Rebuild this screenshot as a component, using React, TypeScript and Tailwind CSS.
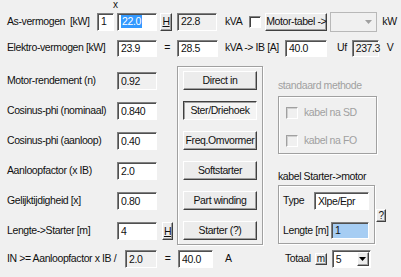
import React from "react";

const sunken =
  "border border-t-[#808080] border-l-[#808080] border-r-white border-b-white shadow-[inset_1px_1px_0_#505050] flex items-center pl-[3px] leading-none whitespace-nowrap";
const raised =
  "border border-t-white border-l-white border-r-[#404040] border-b-[#404040] shadow-[inset_-1px_-1px_0_#a0a0a0] bg-[#ececec] flex items-center justify-center leading-none whitespace-nowrap";
const pressed =
  "border border-t-[#404040] border-l-[#404040] border-r-white border-b-white shadow-[inset_1px_1px_0_#a0a0a0] bg-[#f4f4f4] flex items-center justify-center leading-none whitespace-nowrap";
const etched = "border border-[#a0a0a0] shadow-[inset_1px_1px_0_white,1px_1px_0_white]";

function Arrow({ color = "#000" }: { color?: string }) {
  return (
    <svg width="7" height="4" viewBox="0 0 7 4">
      <path d="M0 0h7L3.5 4z" fill={color} />
    </svg>
  );
}

function Check({ disabled }: { disabled?: boolean }) {
  return (
    <div
      className={
        disabled
          ? "w-[12px] h-[12px] border border-t-[#a0a0a0] border-l-[#a0a0a0] border-r-white border-b-white shadow-[inset_1px_1px_0_#d0d0d0] bg-[#f0f0f0] shrink-0"
          : "w-[12px] h-[12px] border border-t-[#808080] border-l-[#808080] border-r-white border-b-white shadow-[inset_1px_1px_0_#404040] bg-white shrink-0"
      }
    />
  );
}

export default function App() {
  return (
    <div className="w-[401px] h-[277px] bg-[#f0f0f0] text-[10.5px] tracking-[-0.4px] whitespace-nowrap text-[#111] font-['Liberation_Sans',Arial,sans-serif] relative overflow-hidden pt-[12px]">
      <span className="absolute left-[113px] top-[0px] text-[10px] leading-none">x</span>
      {/* Row 1 */}
      <div className="flex items-center h-[19px]">
        <span className="w-[97px] pl-[7px]">As-vermogen&nbsp; [kW]</span>
        <div className={`${sunken} w-[17px] h-[18px] bg-white`}>1</div>
        <div className={`${sunken} w-[40px] h-[18px] bg-white ml-[3px]`}>
          <span className="bg-[#3399ff] text-white px-[1px] h-[13px] flex items-center">22.0</span>
        </div>
        <div className={`${raised} w-[12px] h-[18px] ml-[3px] underline`}>H</div>
        <div className={`${sunken} w-[40px] h-[18px] ml-[5px] bg-[#f0f0f0]`}>22.8</div>
        <span className="ml-[8px]">kVA</span>
        <div className="ml-[7px]"><Check /></div>
        <div className={`${raised} w-[62px] h-[18px] ml-[4px] bg-[#e1e1e1]`}>Motor-tabel -&gt;</div>
        <div className="ml-[3px] w-[47px] h-[20px] border border-[#b8b8b8] bg-[#f0f0f0] flex items-center justify-end pr-[4px]">
          <Arrow color="#a0a0a0" />
        </div>
        <span className="ml-[5px]">kW</span>
      </div>
      {/* Row 2 */}
      <div className="flex items-center h-[18px] mt-[8px]">
        <span className="w-[117px] pl-[7px]">Elektro-vermogen [kW]</span>
        <div className={`${sunken} w-[40px] h-[17px] bg-white`}>23.9</div>
        <span className="w-[20px] text-center">=</span>
        <div className={`${sunken} w-[41px] h-[17px] bg-white`}>28.5</div>
        <span className="ml-[7px] w-[60px]">kVA -&gt; IB [A]</span>
        <div className={`${sunken} w-[42px] h-[17px] bg-white`}>40.0</div>
        <span className="ml-[10px]">Uf</span>
        <div className={`${sunken} w-[27px] h-[17px] ml-[5px] bg-[#f0f0f0] pl-[1px]`}>237.3</div>
        <span className="ml-[8px]">V</span>
      </div>
      {/* Middle */}
      <div className="flex mt-[9px] h-[180px]">
        <div className="w-[177px] flex flex-col pt-[6px] gap-[12px]">
          {[
            ["Motor-rendement (n)", "0.92", true],
            ["Cosinus-phi (nominaal)", "0.840", false],
            ["Cosinus-phi (aanloop)", "0.40", false],
            ["Aanloopfactor (x IB)", "2.0", false],
            ["Gelijktijdigheid [x]", "0.80", false],
            ["Lengte->Starter [m]", "4", false],
          ].map(([l, v, ro], i) => (
            <div key={i} className="flex items-center h-[18px]">
              <span className="w-[117px] pl-[7px]">{l as string}</span>
              <div className={`${sunken} w-[40px] h-[18px] ${ro ? "bg-[#f0f0f0]" : "bg-white"}`}>{v as string}</div>
              {i === 5 && <div className={`${raised} w-[11px] h-[18px] ml-[5px] underline`}>H</div>}
            </div>
          ))}
        </div>
        <div className={`${etched} w-[86px] h-[179px] flex flex-col items-center pt-[4px] gap-[11px]`}>
          <div className={`${raised} w-[74px] h-[19px]`}>Direct in</div>
          <div className={`${pressed} w-[74px] h-[19px]`}>Ster/Driehoek</div>
          <div className={`${raised} w-[74px] h-[19px]`}>Freq.Omvormer</div>
          <div className={`${raised} w-[74px] h-[19px]`}>Softstarter</div>
          <div className={`${raised} w-[74px] h-[19px]`}>Part winding</div>
          <div className={`${raised} w-[74px] h-[19px]`}>Starter (?)</div>
        </div>
        <div className="ml-[15px] flex flex-col">
          <span className="mt-[14px] text-[#a0a0a0] leading-none">standaard methode</span>
          <div className={`${etched} w-[99px] h-[58px] mt-[5px] flex flex-col pl-[7px] pt-[10px] gap-[16px] text-[#a0a0a0]`}>
            <div className="flex items-center gap-[6px] h-[12px]"><Check disabled />kabel na SD</div>
            <div className="flex items-center gap-[6px] h-[12px]"><Check disabled />kabel na FO</div>
          </div>
          <span className="mt-[17px] leading-none">kabel Starter-&gt;motor</span>
          <div className="flex mt-[4px]">
            <div className={`${etched} w-[97px] h-[59px] flex flex-col pl-[4px] pt-[6px] gap-[12px]`}>
              <div className="flex items-center h-[18px]">
                <span className="w-[31px]">Type</span>
                <div className={`${sunken} w-[55px] h-[18px] bg-white`}>Xlpe/Epr</div>
              </div>
              <div className="flex items-center h-[17px]">
                <span className="w-[48px]">Lengte [m]</span>
                <div className={`${sunken} w-[38px] h-[17px] bg-[#a6cdf3]`}>1</div>
              </div>
            </div>
            <div className={`${raised} w-[10px] h-[13px] mt-[24px] ml-[1px] text-[10px]`}>?</div>
          </div>
        </div>
      </div>
      {/* Bottom */}
      <div className="flex items-center h-[18px] mt-[4px]">
        <span className="w-[125px] pl-[7px]">IN &gt;= Aanloopfactor x IB /</span>
        <div className={`${sunken} w-[32px] h-[18px] bg-[#f0f0f0]`}>2.0</div>
        <span className="w-[21px] text-center">=</span>
        <div className={`${sunken} w-[35px] h-[18px] bg-white`}>40.0</div>
        <span className="ml-[12px] w-[60px]">A</span>
        <span>Totaal</span>
        <div className={`${raised} w-[12px] h-[12px] ml-[4px] text-[10px]`}>m</div>
        <div className={`${sunken} w-[39px] h-[18px] bg-white ml-[5px] justify-between pr-[1px]`}>
          <span>5</span>
          <div className={`${raised} w-[12px] h-[14px]`}><Arrow /></div>
        </div>
      </div>
    </div>
  );
}
